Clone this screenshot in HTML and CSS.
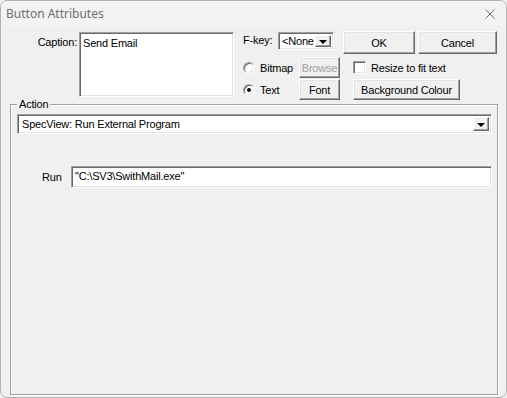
FILE: index.html
```html
<!DOCTYPE html>
<html>
<head>
<meta charset="UTF-8">
<title>Button Attributes</title>
<link rel="stylesheet" href="styles.css">
</head>
<body>

<div class="window">
  <div class="titlebar">
    <span class="title">Button Attributes</span>
    <svg class="close" width="10" height="10" viewBox="0 0 10 10">
      <path d="M0.5 0.5 L9.5 9.5 M9.5 0.5 L0.5 9.5" stroke="#6f6f6f" stroke-width="1" fill="none"/>
    </svg>
  </div>

  <div class="client">
    <div class="top">
      <div class="caption-label">Caption:</div>
      <div class="field caption-box">Send Email</div>

      <div class="controls">
        <div class="row row-fkey">
          <div class="fkey-label">F-key:</div>
          <div class="field combo fkey-combo">
            <span class="combo-text">&lt;None</span>
            <span class="drop"><i class="arrow"></i></span>
          </div>
          <div class="btn ok-btn">OK</div>
          <div class="btn cancel-btn">Cancel</div>
        </div>

        <div class="row row-bitmap">
          <div class="radio-item">
            <span class="radio"></span>
            <span>Bitmap</span>
          </div>
          <div class="btn small-btn disabled">Browse</div>
          <div class="check-item">
            <span class="checkbox"></span>
            <span>Resize to fit text</span>
          </div>
        </div>

        <div class="row row-text">
          <div class="radio-item">
            <span class="radio checked"></span>
            <span>Text</span>
          </div>
          <div class="btn small-btn">Font</div>
          <div class="btn bg-btn">Background Colour</div>
        </div>
      </div>
    </div>

    <fieldset class="group">
      <legend>Action</legend>
      <div class="field combo action-combo">
        <span class="combo-text">SpecView: Run External Program</span>
        <span class="drop"><i class="arrow"></i></span>
      </div>
      <div class="run-row">
        <div class="run-label">Run</div>
        <div class="field run-box">"C:\SV3\SwithMail.exe"</div>
      </div>
    </fieldset>
  </div>
</div>

</body>
</html>
```

FILE: styles.css
```css
/* page + window frame */
body {
  margin: 0;
  background: #f0f0f0;
}

.window {
  box-sizing: border-box;
  width: 507px;
  height: 398px;
  border: 1px solid #b4b4b4;
  border-radius: 7px;
  background: #f0f0f0;
  overflow: hidden;
  font-family: "Liberation Sans", Arial, sans-serif;
  font-size: 11px;
  letter-spacing: -0.2px;
  color: #000;
}

.titlebar {
  height: 25px;
  display: flex;
  align-items: center;
  justify-content: space-between;
  padding: 0 11px 0 5px;
  background: #f3f3f3;
}

.title {
  font-family: "Noto Sans", "Open Sans", sans-serif;
  font-size: 12px;
  letter-spacing: 0;
  color: #6d6d6d;
}

/* sunken fields and raised buttons */
.field {
  box-sizing: border-box;
  background: #fff;
  border: 1px solid;
  border-color: #a0a0a0 #fff #fff #a0a0a0;
  box-shadow: inset 1px 1px 0 #696969, inset -1px -1px 0 #e3e3e3;
}

.btn {
  box-sizing: border-box;
  display: flex;
  align-items: center;
  justify-content: center;
  white-space: nowrap;
  border: 1px solid;
  border-color: #fff #696969 #696969 #fff;
  box-shadow: inset -1px -1px 0 #a0a0a0, inset 1px 1px 0 #e3e3e3;
  background: #f0f0f0;
}

.btn.disabled {
  color: #a0a0a0;
}

/* top part */
.top {
  display: flex;
  margin-top: 5px;
  height: 67px;
}

.caption-label {
  width: 76px;
  padding-right: 2px;
  padding-top: 5px;
  text-align: right;
}

.caption-box {
  width: 155px;
  height: 65px;
  margin-top: 1px;
  padding: 4px 0 0 3px;
}

.controls {
  margin-left: 9px;
  display: flex;
  flex-direction: column;
}

.row {
  display: flex;
  align-items: center;
  white-space: nowrap;
}

.row-fkey {
  height: 23px;
  align-items: flex-start;
}

.row-bitmap {
  height: 21px;
  margin-top: 3px;
}

.row-text {
  height: 21px;
  margin-top: 1px;
}

.fkey-label {
  width: 35px;
  padding-top: 3px;
}

.combo {
  display: flex;
  align-items: center;
  padding: 2px;
}

.combo-text {
  flex: 1;
  padding-left: 2px;
  white-space: nowrap;
  overflow: hidden;
}

.fkey-combo .combo-text {
  padding-left: 1px;
}

.drop {
  box-sizing: border-box;
  width: 16px;
  height: 100%;
  display: flex;
  align-items: center;
  justify-content: center;
  border: 1px solid;
  border-color: #fff #696969 #696969 #fff;
  box-shadow: inset -1px -1px 0 #a0a0a0;
  background: #f0f0f0;
}

.arrow {
  width: 0;
  height: 0;
  border-left: 4px solid transparent;
  border-right: 4px solid transparent;
  border-top: 4px solid #000;
  margin-top: 1px;
}

.fkey-combo {
  width: 56px;
  height: 18px;
  margin-top: 1px;
}

.ok-btn {
  width: 72px;
  height: 23px;
  margin-left: 9px;
}

.cancel-btn {
  width: 79px;
  height: 23px;
  margin-left: 3px;
}

.radio-item {
  width: 56px;
  display: flex;
  align-items: center;
}

.radio {
  box-sizing: border-box;
  width: 12px;
  height: 12px;
  margin-right: 5px;
  border-radius: 50%;
  background: #fff;
  border: 1px solid;
  border-color: #a0a0a0 #fff #fff #a0a0a0;
  box-shadow: inset 1px 1px 0 #696969, inset -1px -1px 0 #e3e3e3;
  display: flex;
  align-items: center;
  justify-content: center;
}

.radio.checked::after {
  content: "";
  width: 4px;
  height: 4px;
  border-radius: 50%;
  background: #000;
}

.small-btn {
  width: 41px;
  height: 21px;
}

.check-item {
  display: flex;
  align-items: center;
  margin-left: 13px;
}

.checkbox {
  box-sizing: border-box;
  width: 13px;
  height: 13px;
  margin-right: 5px;
  background: #fff;
  border: 1px solid;
  border-color: #a0a0a0 #fff #fff #a0a0a0;
  box-shadow: inset 1px 1px 0 #696969, inset -1px -1px 0 #e3e3e3;
}

.bg-btn {
  width: 107px;
  height: 21px;
  margin-left: 13px;
}

/* action group */
.group {
  margin: 0 8px 0 9px;
  height: 297px;
  box-sizing: border-box;
  padding: 4px 5px 0 6px;
  border: 1px solid #a0a0a0;
  box-shadow: inset 1px 1px 0 #fff, 1px 1px 0 #fff;
}

.group legend {
  padding: 0 2px;
  margin-left: 0;
  background: #f0f0f0;
}

.action-combo {
  height: 20px;
}

.run-row {
  display: flex;
  align-items: center;
  margin-top: 32px;
}

.run-label {
  width: 54px;
  padding-left: 25px;
  box-sizing: border-box;
}

.run-box {
  flex: 1;
  height: 22px;
  padding: 3px 0 0 3px;
}
```
